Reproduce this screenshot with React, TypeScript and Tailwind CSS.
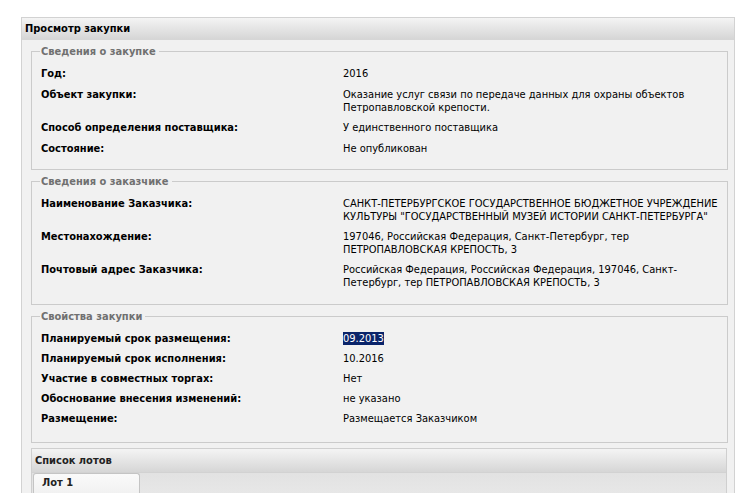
import React from "react";

const font = { fontFamily: '"DejaVu Sans Condensed", "DejaVu Sans", sans-serif' };

type Row = { label: string; value: React.ReactNode };

const fieldsetBase = "ml-[9px] mr-[6px] mt-[5px] border border-[#cbcbcb] px-[9px] pt-[5px] min-w-0";

function Field({
  legend,
  rows,
  tight,
  pad,
}: {
  legend: string;
  rows: Row[];
  tight?: boolean;
  pad: string;
}) {
  return (
    <fieldset className={fieldsetBase + " " + pad}>
      <legend className="-ml-[1px] pl-[1px] pr-[3px] text-[11px] font-bold leading-[13px] text-[#707070]">
        {legend}
      </legend>
      {rows.map((r, i) => (
        <div key={i} className="flex items-start">
          <div
            className={
              tight
                ? "w-[302px] shrink-0 pt-[3px] pb-[2px] text-[11px] font-bold leading-[15px] text-black"
                : "w-[302px] shrink-0 py-[3px] text-[11px] font-bold leading-[15px] text-black"
            }
          >
            {r.label}
          </div>
          <div className="min-w-0 flex-1 pt-[4px] pb-[3px] text-[11px] leading-[13px] text-black">{r.value}</div>
        </div>
      ))}
    </fieldset>
  );
}

export default function App() {
  return (
    <div className="min-h-screen bg-white pl-[21px] pr-[4px] pt-[17px]" style={font}>
      <div className="h-[476px] overflow-hidden border border-b-0 border-[#d2d2d2] bg-[#f1f1f1]">
        <div className="h-[22px] border-b border-[#d6d6d6] bg-gradient-to-b from-[#f4f4f4] to-[#d6d6d6] pl-[3px] text-[11px] font-bold leading-[21px] text-black">
          Просмотр закупки
        </div>
        <div>
          <Field
            legend="Сведения о закупке"
            pad="pb-[10px]"
            rows={[
              { label: "Год:", value: "2016" },
              {
                label: "Объект закупки:",
                value: "Оказание услуг связи по передаче данных для охраны объектов Петропавловской крепости.",
              },
              { label: "Способ определения поставщика:", value: "У единственного поставщика" },
              { label: "Состояние:", value: "Не опубликован" },
            ]}
          />
          <Field
            legend="Сведения о заказчике"
            pad="pb-[12px]"
            rows={[
              {
                label: "Наименование Заказчика:",
                value:
                  'САНКТ-ПЕТЕРБУРГСКОЕ ГОСУДАРСТВЕННОЕ БЮДЖЕТНОЕ УЧРЕЖДЕНИЕ КУЛЬТУРЫ "ГОСУДАРСТВЕННЫЙ МУЗЕЙ ИСТОРИИ САНКТ-ПЕТЕРБУРГА"',
              },
              {
                label: "Местонахождение:",
                value: "197046, Российская Федерация, Санкт-Петербург, тер ПЕТРОПАВЛОВСКАЯ КРЕПОСТЬ, 3",
              },
              {
                label: "Почтовый адрес Заказчика:",
                value: "Российская Федерация, Российская Федерация, 197046, Санкт-Петербург, тер ПЕТРОПАВЛОВСКАЯ КРЕПОСТЬ, 3",
              },
            ]}
          />
          <Field
            legend="Свойства закупки"
            tight
            pad="pb-[14px]"
            rows={[
              {
                label: "Планируемый срок размещения:",
                value: <span className="bg-[#0a246a] text-white">09.2013</span>,
              },
              { label: "Планируемый срок исполнения:", value: "10.2016" },
              { label: "Участие в совместных торгах:", value: "Нет" },
              { label: "Обоснование внесения изменений:", value: "не указано" },
              { label: "Размещение:", value: "Размещается Заказчиком" },
            ]}
          />
          <div className="ml-[9px] mr-[7px] mt-[5px] border border-[#cfcfcf] bg-[#ececec]">
            <div className="h-[24px] border-b border-[#d2d2d2] bg-gradient-to-b from-[#f4f4f4] to-[#d6d6d6] pl-[3px] text-[11px] font-bold leading-[23px] text-[#222]">
              Список лотов
            </div>
            <div className="flex h-[40px] items-start bg-gradient-to-b from-[#e2e2e2] to-[#ececec] pl-[1px]">
              <div className="h-[30px] w-[107px] rounded-t-[3px] border border-b-0 border-[#c4c4c4] bg-gradient-to-b from-[#fafafa] to-[#ededed] pl-[8px] text-[11px] font-bold leading-[18px] text-[#222]">
                Лот 1
              </div>
            </div>
          </div>
        </div>
      </div>
    </div>
  );
}
